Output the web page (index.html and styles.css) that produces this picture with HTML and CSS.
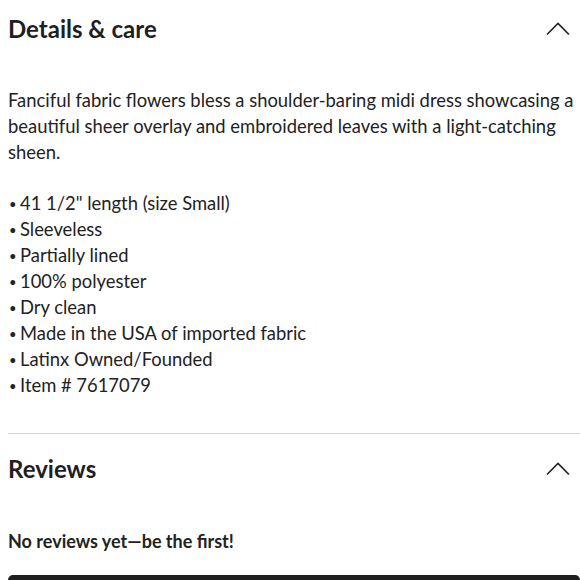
FILE: index.html
```html
<!DOCTYPE html>
<html lang="en">
<head>
<meta charset="utf-8">
<title>Details &amp; care</title>
<link rel="stylesheet" href="styles.css">
</head>
<body>
<main class="page">
  <section class="accordion">
    <header class="acc-head">
      <h2 class="acc-title">Details &amp; care</h2>
      <svg class="chevron" width="24" height="14" viewBox="0 0 24 14" aria-hidden="true"><path d="M1 12.5 L12 1.5 L23 12.5" fill="none" stroke="#222" stroke-width="1.6"/></svg>
    </header>
    <div class="acc-body">
      <p class="desc">Fanciful fabric flowers bless a shoulder-baring midi dress showcasing a beautiful sheer overlay and embroidered leaves with a light-catching sheen.</p>
      <ul class="bullets">
        <li>41 1/2" length (size Small)</li>
        <li>Sleeveless</li>
        <li>Partially lined</li>
        <li>100% polyester</li>
        <li>Dry clean</li>
        <li>Made in the USA of imported fabric</li>
        <li>Latinx Owned/Founded</li>
        <li>Item # 7617079</li>
      </ul>
    </div>
  </section>
  <section class="accordion reviews">
    <header class="acc-head">
      <h2 class="acc-title">Reviews</h2>
      <svg class="chevron" width="24" height="14" viewBox="0 0 24 14" aria-hidden="true"><path d="M1 12.5 L12 1.5 L23 12.5" fill="none" stroke="#222" stroke-width="1.6"/></svg>
    </header>
    <div class="acc-body">
      <p class="empty">No reviews yet—be the first!</p>
      <button class="write-btn" type="button">Write a review</button>
    </div>
  </section>
</main>
</body>
</html>
```
FILE: styles.css
```css
html, body {
  margin: 0;
  padding: 0;
  background: #fff;
}
body {
  font-family: Lato, "Open Sans", sans-serif;
  color: #222;
  overflow: hidden;
}
.page {
  padding-left: 8px;
}
.accordion {
  display: flex;
  flex-direction: column;
}
.acc-head {
  display: flex;
  align-items: center;
  justify-content: space-between;
  height: 58px;
  padding-right: 10px;
}
.acc-title {
  margin: 0;
  font-size: 24px;
  font-weight: 700;
  line-height: 28px;
  color: #1f1f1f;
}
.chevron {
  display: block;
}
.acc-body {
  padding-top: 29px;
}
.desc {
  margin: 0;
  font-size: 18.4px;
  line-height: 26px;
}
.bullets {
  list-style: none;
  margin: 25px 0 0;
  padding: 0 0 35px;
  font-size: 18.4px;
  line-height: 26px;
  border-bottom: 1px solid #d4d4d4;
}
.bullets li {
  height: 26px;
  overflow: visible;
}
.bullets li::before {
  content: "•";
  display: inline-block;
  width: 11px;
  padding-left: 1px;
  font-size: 13px;
  line-height: 10px;
  vertical-align: 1px;
}
.reviews .acc-head {
  margin-top: 6px;
}
.reviews .acc-body {
  padding-top: 31px;
}
.empty {
  margin: 0;
  font-size: 18px;
  font-weight: 700;
  line-height: 24px;
}
.write-btn {
  display: block;
  margin-top: 22px;
  width: 100%;
  height: 64px;
  border: 0;
  border-radius: 5px;
  background: #1f1f1f;
  color: #fff;
  font: 700 16px Lato, sans-serif;
}
```
